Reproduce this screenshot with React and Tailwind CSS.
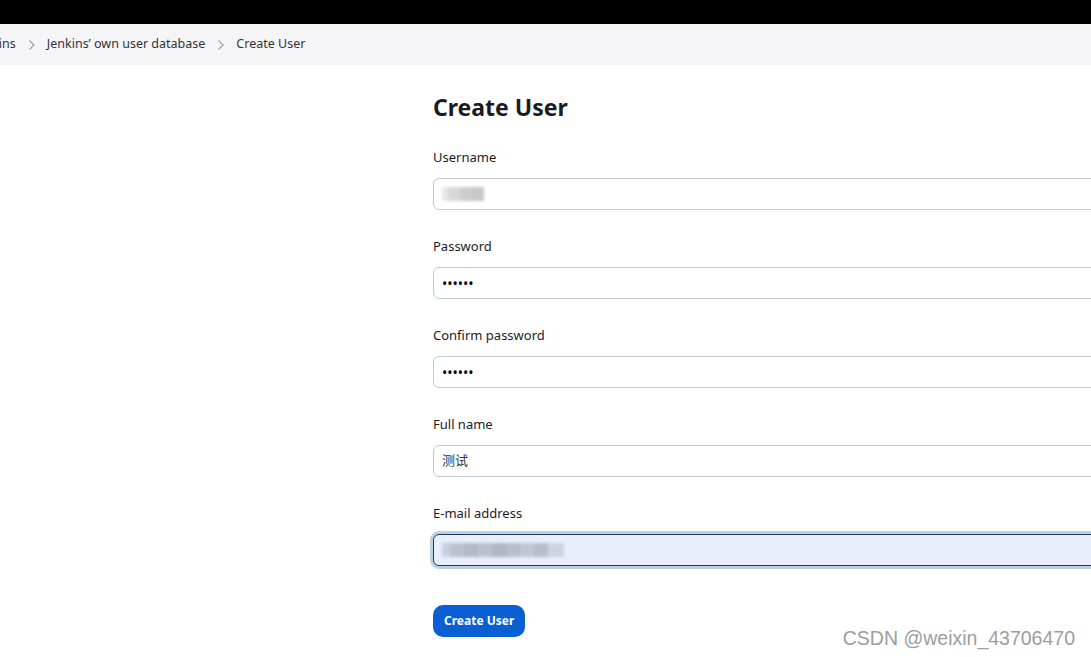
import React from 'react';

function Chevron() {
    return (
        <svg className="w-[9px] h-[12px] mx-[11px] text-[#a3a3a8]" viewBox="0 0 9 12" fill="none" stroke="currentColor" strokeWidth={1.3}>
            <path d="M2.5 1.5l4.5 4.5-4.5 4.5" />
        </svg>
    );
}

function Blur({ blocks }) {
    return (
        <div className="flex items-center h-full blur-[1.5px]">
            {blocks.map((b, i) => (
                <div key={i} className={`h-[14px] ${b}`} />
            ))}
        </div>
    );
}

function Field({ label, children, focused }) {
    return (
        <div className="mb-[26px]">
            <div className="h-[20px] leading-[20px] text-[13px] text-[#1b1b1f]">{label}</div>
            <div
                className={`mt-[11px] h-[32px] w-[700px] rounded-[6px] border px-[8px] flex items-center text-[13px] ${
                    focused
                        ? 'bg-[#e8effb] border-[#1e3a5c] ring-[3px] ring-[#bcd2e6]'
                        : 'bg-white border-[#c2cbd2]'
                }`}
            >
                {children}
            </div>
        </div>
    );
}

export default function App() {
    return (
        <div className="relative min-h-[657px] overflow-hidden bg-white font-['Noto_Sans','Noto_Sans_CJK_SC',sans-serif]">
            <div className="h-[24px] bg-black" />
            <div className="h-[41px] bg-[#f5f5f7] flex items-center text-[12.5px] text-[#333338]">
                <div className="flex items-center -ml-[26px]">
                    <span>Jenkins</span>
                    <Chevron />
                    <span>Jenkins’ own user database</span>
                    <Chevron />
                    <span>Create User</span>
                </div>
            </div>

            <div className="flex">
                <div className="w-[433px] shrink-0" />
                <div className="pt-[26px]">
                    <h1 className="text-[23px] leading-[32px] font-bold text-[#1b1b1f] mb-[24px]">Create User</h1>

                    <Field label="Username">
                        <Blur blocks={['w-[6px] bg-[#e6e6e6]', 'w-[12px] bg-[#d8d8d8]', 'w-[12px] bg-[#cdcdcd]', 'w-[12px] bg-[#c8c8c8]']} />
                    </Field>
                    <Field label="Password">
                        <span className="text-[14px] text-black">••••••</span>
                    </Field>
                    <Field label="Confirm password">
                        <span className="text-[14px] text-black">••••••</span>
                    </Field>
                    <Field label="Full name">
                        <span className="text-[#333]">测试</span>
                    </Field>
                    <Field label="E-mail address" focused>
                        <Blur
                            blocks={[
                                'w-[8px] bg-[#c9d0dc]',
                                'w-[14px] bg-[#bcc3cf]',
                                'w-[14px] bg-[#b3bac6]',
                                'w-[14px] bg-[#bac1cd]',
                                'w-[14px] bg-[#b0b7c3]',
                                'w-[14px] bg-[#b7bec9]',
                                'w-[14px] bg-[#c0c7d2]',
                                'w-[14px] bg-[#b8bfca]',
                                'w-[16px] bg-[#cfd5de]',
                            ]}
                        />
                    </Field>

                    <button className="mt-[13px] h-[32px] px-[11px] rounded-[10px] bg-[#0a5fd3] text-white text-[12px] font-bold">
                        Create User
                    </button>
                </div>
            </div>

            <div className="absolute right-[16px] bottom-[4px] text-[19.5px] text-[#9d9d9d] font-['Liberation_Sans',sans-serif] [text-shadow:0_0_2px_#fff]">
                CSDN @weixin_43706470
            </div>
        </div>
    );
}
